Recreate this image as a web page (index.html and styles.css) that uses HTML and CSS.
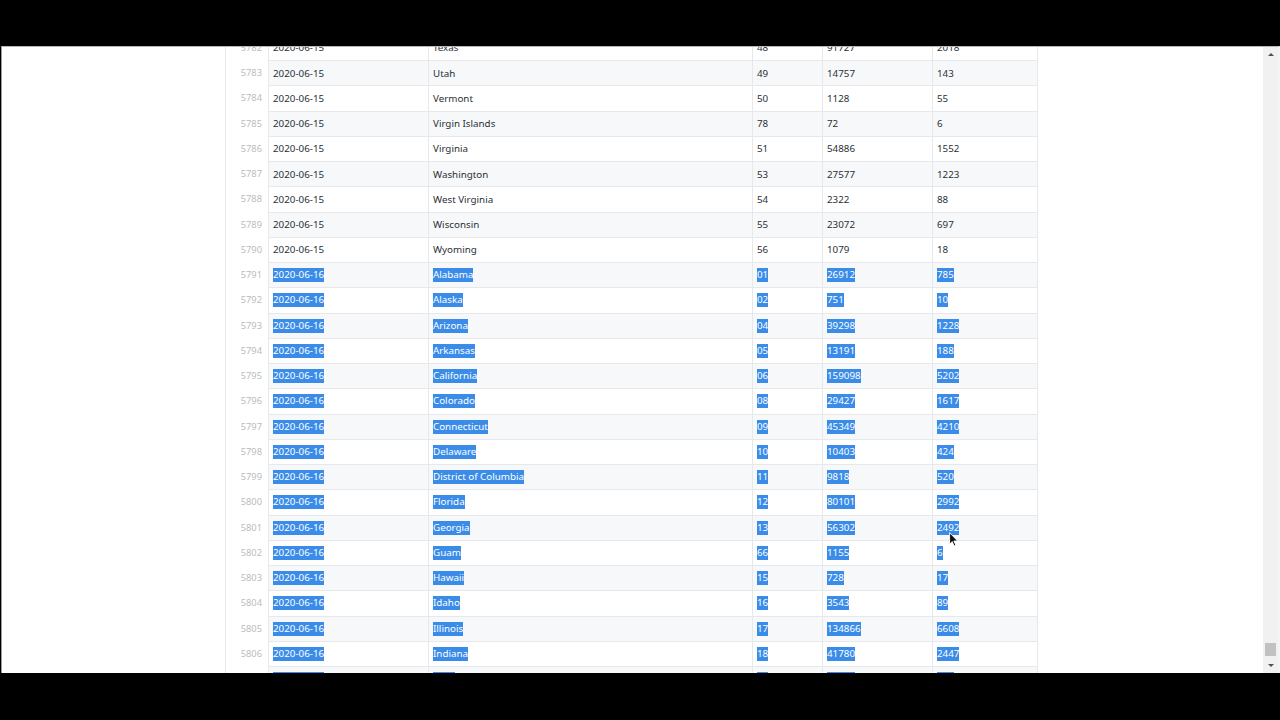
FILE: index.html
```html
<!DOCTYPE html>
<html>
<head>
<meta charset="utf-8">
<link rel="stylesheet" href="styles.css">
</head>
<body>
<div class="screen">
  <div class="topbar"></div>
  <div class="window">
    <div class="page">
      <div class="sheet">
        <div class="row"><div class="ln">5782</div><div class="c">2020-06-15</div><div class="c">Texas</div><div class="c">48</div><div class="c">91727</div><div class="c">2018</div></div>
        <div class="row alt"><div class="ln">5783</div><div class="c">2020-06-15</div><div class="c">Utah</div><div class="c">49</div><div class="c">14757</div><div class="c">143</div></div>
        <div class="row"><div class="ln">5784</div><div class="c">2020-06-15</div><div class="c">Vermont</div><div class="c">50</div><div class="c">1128</div><div class="c">55</div></div>
        <div class="row alt"><div class="ln">5785</div><div class="c">2020-06-15</div><div class="c">Virgin Islands</div><div class="c">78</div><div class="c">72</div><div class="c">6</div></div>
        <div class="row"><div class="ln">5786</div><div class="c">2020-06-15</div><div class="c">Virginia</div><div class="c">51</div><div class="c">54886</div><div class="c">1552</div></div>
        <div class="row alt"><div class="ln">5787</div><div class="c">2020-06-15</div><div class="c">Washington</div><div class="c">53</div><div class="c">27577</div><div class="c">1223</div></div>
        <div class="row"><div class="ln">5788</div><div class="c">2020-06-15</div><div class="c">West Virginia</div><div class="c">54</div><div class="c">2322</div><div class="c">88</div></div>
        <div class="row alt"><div class="ln">5789</div><div class="c">2020-06-15</div><div class="c">Wisconsin</div><div class="c">55</div><div class="c">23072</div><div class="c">697</div></div>
        <div class="row"><div class="ln">5790</div><div class="c">2020-06-15</div><div class="c">Wyoming</div><div class="c">56</div><div class="c">1079</div><div class="c">18</div></div>
        <div class="row alt"><div class="ln">5791</div><div class="c"><span class="sel">2020-06-16</span></div><div class="c"><span class="sel">Alabama</span></div><div class="c"><span class="sel">01</span></div><div class="c"><span class="sel">26912</span></div><div class="c"><span class="sel">785</span></div></div>
        <div class="row"><div class="ln">5792</div><div class="c"><span class="sel">2020-06-16</span></div><div class="c"><span class="sel">Alaska</span></div><div class="c"><span class="sel">02</span></div><div class="c"><span class="sel">751</span></div><div class="c"><span class="sel">10</span></div></div>
        <div class="row alt"><div class="ln">5793</div><div class="c"><span class="sel">2020-06-16</span></div><div class="c"><span class="sel">Arizona</span></div><div class="c"><span class="sel">04</span></div><div class="c"><span class="sel">39298</span></div><div class="c"><span class="sel">1228</span></div></div>
        <div class="row"><div class="ln">5794</div><div class="c"><span class="sel">2020-06-16</span></div><div class="c"><span class="sel">Arkansas</span></div><div class="c"><span class="sel">05</span></div><div class="c"><span class="sel">13191</span></div><div class="c"><span class="sel">188</span></div></div>
        <div class="row alt"><div class="ln">5795</div><div class="c"><span class="sel">2020-06-16</span></div><div class="c"><span class="sel">California</span></div><div class="c"><span class="sel">06</span></div><div class="c"><span class="sel">159098</span></div><div class="c"><span class="sel">5202</span></div></div>
        <div class="row"><div class="ln">5796</div><div class="c"><span class="sel">2020-06-16</span></div><div class="c"><span class="sel">Colorado</span></div><div class="c"><span class="sel">08</span></div><div class="c"><span class="sel">29427</span></div><div class="c"><span class="sel">1617</span></div></div>
        <div class="row alt"><div class="ln">5797</div><div class="c"><span class="sel">2020-06-16</span></div><div class="c"><span class="sel">Connecticut</span></div><div class="c"><span class="sel">09</span></div><div class="c"><span class="sel">45349</span></div><div class="c"><span class="sel">4210</span></div></div>
        <div class="row"><div class="ln">5798</div><div class="c"><span class="sel">2020-06-16</span></div><div class="c"><span class="sel">Delaware</span></div><div class="c"><span class="sel">10</span></div><div class="c"><span class="sel">10403</span></div><div class="c"><span class="sel">424</span></div></div>
        <div class="row alt"><div class="ln">5799</div><div class="c"><span class="sel">2020-06-16</span></div><div class="c"><span class="sel">District of Columbia</span></div><div class="c"><span class="sel">11</span></div><div class="c"><span class="sel">9818</span></div><div class="c"><span class="sel">520</span></div></div>
        <div class="row"><div class="ln">5800</div><div class="c"><span class="sel">2020-06-16</span></div><div class="c"><span class="sel">Florida</span></div><div class="c"><span class="sel">12</span></div><div class="c"><span class="sel">80101</span></div><div class="c"><span class="sel">2992</span></div></div>
        <div class="row alt"><div class="ln">5801</div><div class="c"><span class="sel">2020-06-16</span></div><div class="c"><span class="sel">Georgia</span></div><div class="c"><span class="sel">13</span></div><div class="c"><span class="sel">56302</span></div><div class="c"><span class="sel">2492</span></div></div>
        <div class="row"><div class="ln">5802</div><div class="c"><span class="sel">2020-06-16</span></div><div class="c"><span class="sel">Guam</span></div><div class="c"><span class="sel">66</span></div><div class="c"><span class="sel">1155</span></div><div class="c"><span class="sel">6</span></div></div>
        <div class="row alt"><div class="ln">5803</div><div class="c"><span class="sel">2020-06-16</span></div><div class="c"><span class="sel">Hawaii</span></div><div class="c"><span class="sel">15</span></div><div class="c"><span class="sel">728</span></div><div class="c"><span class="sel">17</span></div></div>
        <div class="row"><div class="ln">5804</div><div class="c"><span class="sel">2020-06-16</span></div><div class="c"><span class="sel">Idaho</span></div><div class="c"><span class="sel">16</span></div><div class="c"><span class="sel">3543</span></div><div class="c"><span class="sel">89</span></div></div>
        <div class="row alt"><div class="ln">5805</div><div class="c"><span class="sel">2020-06-16</span></div><div class="c"><span class="sel">Illinois</span></div><div class="c"><span class="sel">17</span></div><div class="c"><span class="sel">134866</span></div><div class="c"><span class="sel">6608</span></div></div>
        <div class="row"><div class="ln">5806</div><div class="c"><span class="sel">2020-06-16</span></div><div class="c"><span class="sel">Indiana</span></div><div class="c"><span class="sel">18</span></div><div class="c"><span class="sel">41780</span></div><div class="c"><span class="sel">2447</span></div></div>
        <div class="row alt"><div class="ln">5807</div><div class="c"><span class="sel">2020-06-16</span></div><div class="c"><span class="sel">Iowa</span></div><div class="c"><span class="sel">19</span></div><div class="c"><span class="sel">24049</span></div><div class="c"><span class="sel">664</span></div></div>
      </div>
      <svg class="cursor" width="10" height="15" viewBox="0 0 10 15"><path d="M0.6 0.6 L0.6 12.2 L3.2 9.6 L5.1 13.9 L6.8 13.1 L4.9 9 L8.6 9 Z" fill="#111" stroke="#fff" stroke-width="0.9"/></svg>
    </div>
    <div class="scroll">
      <div class="arrow"><span class="tri-up"></span></div>
      <div class="track"><div class="thumb"></div></div>
      <div class="arrow"><span class="tri-down"></span></div>
    </div>
  </div>
</div>
</body>
</html>
```

FILE: styles.css
```css
html, body {
  margin: 0;
  padding: 0;
  background: #000;
}
body {
  font-family: "Noto Sans", "Open Sans", sans-serif;
}
.screen {
  width: 1280px;
  height: 720px;
  display: flex;
  flex-direction: column;
}
.topbar {
  height: 46px;
  flex: none;
  background: #000;
}
.window {
  height: 626px;
  flex: none;
  margin-left: 1px;
  border-left: 1px solid #9c9c9c;
  border-top: 1px solid #b8b8b8;
  border-right: 2px solid #f4f4f4;
  background: #fff;
  display: flex;
  overflow: hidden;
}
.page {
  flex: 1;
  overflow: hidden;
  position: relative;
}
.sheet {
  width: 811px;
  margin-left: 223px;
  margin-top: -12.2px;
  border-left: 1px solid #e6e8eb;
  border-right: 1px solid #e6e8eb;
}
.row {
  display: grid;
  grid-template-columns: 42px 160px 324px 70px 110px 105px;
  height: 25.26px;
}
.ln {
  display: flex;
  align-items: center;
  justify-content: flex-end;
  padding-right: 6px;
  font-size: 9.3px;
  color: #b9bcc0;
  background: #fff;
}
.c {
  display: flex;
  align-items: center;
  padding-left: 4px;
  border-left: 1px solid #e6e8eb;
  border-top: 1px solid #e6e8eb;
  font-size: 9.8px;
  color: #2b3036;
  background: #fff;
  white-space: nowrap;
  overflow: hidden;
}
.row.alt .c {
  background: #f6f8fa;
}
.sel {
  background: #3a8ce8;
  color: #fff;
  line-height: 14px;
  display: inline-block;
}
.cursor {
  position: absolute;
  left: 947px;
  top: 485px;
}
.scroll {
  width: 15px;
  flex: none;
  background: #f1f1f1;
  display: flex;
  flex-direction: column;
}
.arrow {
  height: 15px;
  flex: none;
  display: flex;
  align-items: center;
  justify-content: center;
}
.tri-up {
  width: 0;
  height: 0;
  border-left: 3.5px solid transparent;
  border-right: 3.5px solid transparent;
  border-bottom: 3.5px solid #505050;
}
.tri-down {
  width: 0;
  height: 0;
  border-left: 3.5px solid transparent;
  border-right: 3.5px solid transparent;
  border-top: 3.5px solid #505050;
}
.track {
  flex: 1;
  display: flex;
  flex-direction: column;
  justify-content: flex-end;
  align-items: center;
}
.thumb {
  width: 11px;
  height: 13px;
  background: #c1c1c1;
  margin-bottom: 2px;
}
```
